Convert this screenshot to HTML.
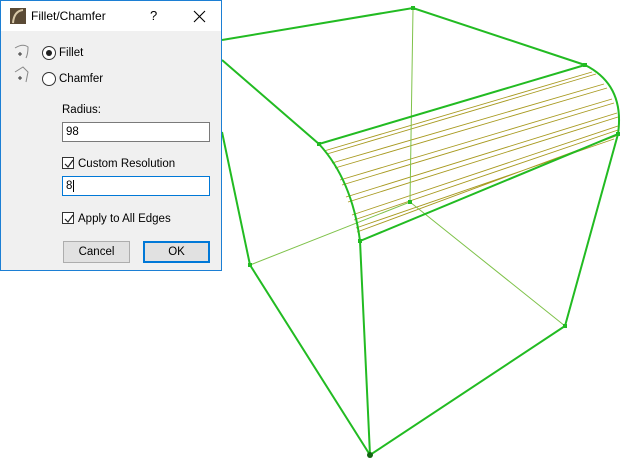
<!DOCTYPE html>
<html><head><style>
body{margin:0;width:625px;height:462px;background:#fff;position:relative;overflow:hidden;font-family:"Liberation Sans",sans-serif;font-size:11.5px;color:#000}
#dlg{position:absolute;left:0;top:0;width:220px;height:269px;border:1px solid #1c7fd4;background:#f0f0f0}
#tb{height:30px;background:#fff;position:relative}
.t{position:absolute;white-space:nowrap}
.inp{position:absolute;left:61px;width:148px;height:20px;background:#fff;border:1px solid #7a7a7a;box-sizing:border-box;padding:3px 3px;font-size:11.5px}
.cb{position:absolute;left:61px;width:12px;height:12px;border:1px solid #333;background:#fff;box-sizing:border-box}
.btn{position:absolute;top:240px;width:67px;height:22px;box-sizing:border-box;text-align:center;line-height:20px;background:#e1e1e1}
</style></head><body>
<svg width="625" height="462" style="position:absolute;left:0;top:0">
<g stroke="#a89a20" stroke-width="0.9" fill="none">
<path d="M324 151 L592 72 M327 154 L596 74 M332 163 L604 84 M335 168 L607 88 M340 180 L612 99 M342 185 L614 103 M346 197 L617 113 M348 202 L618 117 M352 215 L618 126 M354 220 L618 130 M356 228 L614 139 M357 232 L616 136"/>
</g>
<g stroke="#7fc24a" stroke-width="1" fill="none">
<path d="M413 9 L410 202 L250 265 M410 202 L565 326"/>
</g>
<g stroke="#22bb22" stroke-width="2" fill="none">
<path d="M222 40 L413 8 L585 65 M222 60 L319 144 L585 65 M319 144 Q352 180 360 241 L618 134 M585 65 Q625 85 618 134 L565 326 L370 455 L360 241 M222 132 L250 265 L370 455"/>
</g>
<g fill="#22bb22">
<rect x="411" y="6" width="4" height="4"/><rect x="317" y="142" width="4" height="4"/><rect x="583" y="63" width="4" height="4"/><rect x="358" y="239" width="4" height="4"/><rect x="616" y="132" width="4" height="4"/><rect x="563" y="324" width="4" height="4"/><rect x="248" y="263" width="4" height="4"/><rect x="408" y="200" width="4" height="4"/>
<circle cx="370" cy="455" r="3" fill="#116611"/>
</g>
</svg>
<div id="dlg">
<div id="tb">
<svg width="16" height="16" style="position:absolute;left:9px;top:7px"><rect width="16" height="16" fill="#5a4a35"/><path d="M3 15 Q4 3 13 2" stroke="#d8c8a8" stroke-width="2" fill="none"/></svg>
<div class="t" style="left:30px;top:8px;font-size:12px">Fillet/Chamfer</div>
<div class="t" style="left:149px;top:7px;font-size:13px">?</div>
<svg width="14" height="14" style="position:absolute;left:192px;top:9px" stroke="#000" stroke-width="1.1"><path d="M1 1L12 12M12 1L1 12"/></svg>
</div>
<svg width="20" height="60" style="position:absolute;left:12px;top:41px" stroke="#888" fill="none" stroke-width="1"><path d="M2 6 Q10 1 15 5 Q15 12 13 16"/><path d="M5 12h4M7 10v4" stroke="#333"/><path d="M2 30 L10 25 L15 30 L13 40"/><path d="M5 36h4M7 34v4" stroke="#333"/></svg>
<div style="position:absolute;left:41px;top:45px;width:12px;height:12px;border:1px solid #333;border-radius:50%;background:#fff"><div style="position:absolute;left:3px;top:3px;width:6px;height:6px;border-radius:50%;background:#222"></div></div>
<div class="t" style="left:58px;top:46px">Fillet</div>
<div style="position:absolute;left:41px;top:71px;width:12px;height:12px;border:1px solid #333;border-radius:50%;background:#fff"></div>
<div class="t" style="left:58px;top:72px">Chamfer</div>
<div class="t" style="left:61px;top:103px">Radius:</div>
<div class="inp" style="top:121px">98</div>
<div class="cb" style="top:156px"></div><svg width="12" height="12" style="position:absolute;left:62px;top:157px" stroke="#222" stroke-width="1.2" fill="none"><path d="M2 6L5 9L10 2"/></svg>
<div class="t" style="left:77px;top:157px">Custom Resolution</div>
<div class="inp" style="top:175px;border-color:#0078d7">8<span style="border-left:1px solid #000;margin-left:1px"></span></div>
<div class="cb" style="top:211px"></div><svg width="12" height="12" style="position:absolute;left:62px;top:212px" stroke="#222" stroke-width="1.2" fill="none"><path d="M2 6L5 9L10 2"/></svg>
<div class="t" style="left:77px;top:212px">Apply to All Edges</div>
<div class="btn" style="left:62px;border:1px solid #adadad">Cancel</div>
<div class="btn" style="left:142px;border:2px solid #0078d7;line-height:18px">OK</div>
</div>
</body></html>
